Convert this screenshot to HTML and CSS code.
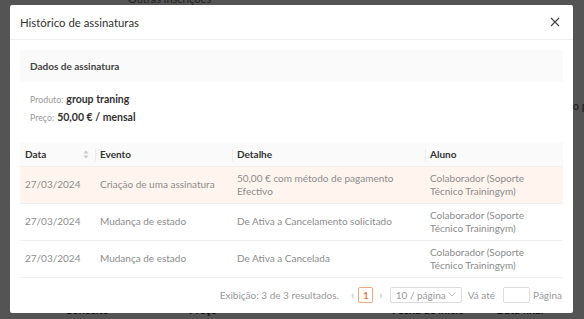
FILE: index.html
```html
<!DOCTYPE html>
<html lang="pt">
<head>
    <meta charset="UTF-8">
    <meta name="viewport" content="width=device-width, initial-scale=1.0">
    <title>Histórico de assinaturas</title>
    <link rel="stylesheet" href="styles.css">
</head>
<body>
    <div class="page">
        <div class="page-tabs">Outras inscrições</div>
        <div class="page-side">o p</div>
        <div class="page-cols">
            <span class="col-a">Conceito</span>
            <span class="col-b">Preço</span>
            <span class="col-c">Fecha de inicio</span>
            <span class="col-d">Data final</span>
        </div>
    </div>

    <div class="mask"></div>

    <div class="modal">
        <div class="modal-header">
            <span class="modal-title">Histórico de assinaturas</span>
            <svg class="close" width="10" height="10" viewBox="0 0 10 10">
                <path d="M1 1 L9 9 M9 1 L1 9" stroke="#444" stroke-width="1.1" fill="none"/>
            </svg>
        </div>

        <div class="modal-body">
            <div class="info-box">Dados de assinatura</div>
            <div class="info-lines">
                <div class="info-row"><span class="label">Produto:</span> <b>group traning</b></div>
                <div class="info-row"><span class="label">Preço:</span> <b>50,00 € / mensal</b></div>
            </div>

            <table class="history">
                <thead>
                    <tr>
                        <th class="c-date">
                            <span class="th-in">Data
                                <svg class="sort" width="6" height="9" viewBox="0 0 6 9">
                                    <path d="M3 0.5 L5.5 3.5 L0.5 3.5 Z M3 8.5 L5.5 5.5 L0.5 5.5 Z" fill="#c8c8c8"/>
                                </svg>
                            </span>
                        </th>
                        <th class="c-event">Evento</th>
                        <th class="c-detail">Detalhe</th>
                        <th class="c-user">Aluno</th>
                    </tr>
                </thead>
                <tbody>
                    <tr class="active">
                        <td>27/03/2024</td>
                        <td>Criação de uma assinatura</td>
                        <td>50,00 € com método de pagamento Efectivo</td>
                        <td>Colaborador (Soporte Técnico Trainingym)</td>
                    </tr>
                    <tr>
                        <td>27/03/2024</td>
                        <td>Mudança de estado</td>
                        <td>De Ativa a Cancelamento solicitado</td>
                        <td>Colaborador (Soporte Técnico Trainingym)</td>
                    </tr>
                    <tr>
                        <td>27/03/2024</td>
                        <td>Mudança de estado</td>
                        <td>De Ativa a Cancelada</td>
                        <td>Colaborador (Soporte Técnico Trainingym)</td>
                    </tr>
                </tbody>
            </table>

            <div class="pager">
                <span class="total">Exibição: 3 de 3 resultados.</span>
                <span class="arrow prev">&lsaquo;</span>
                <span class="page-num">1</span>
                <span class="arrow next">&rsaquo;</span>
                <span class="size-select">10 / página
                    <svg width="8" height="5" viewBox="0 0 8 5">
                        <path d="M0.5 0.5 L4 4 L7.5 0.5" stroke="#bbb" fill="none"/>
                    </svg>
                </span>
                <span class="goto">Vá até</span>
                <span class="goto-input"></span>
                <span class="goto-end">Página</span>
            </div>
        </div>
    </div>
</body>
</html>
```

FILE: styles.css
```css
body {
    margin: 0;
    font-family: Lato, "Noto Sans", sans-serif;
    font-size: 10px;
    color: #333;
    width: 584px;
    height: 319px;
    overflow: hidden;
    position: relative;
    background-color: #fff;
}

/* page behind the dialog */
.page {
    height: 319px;
    position: relative;
    color: #222;
    font-weight: 700;
    font-size: 11px;
}

.page-tabs {
    padding-left: 128px;
    margin-top: -8px;
    font-weight: 400;
    color: #666;
}

.page-side {
    position: absolute;
    top: 107px;
    right: -4px;
    font-weight: 400;
    color: #555;
}

.page-cols {
    position: absolute;
    top: 311px;
    left: 0;
    width: 584px;
    display: flex;
}

.col-a { margin-left: 65px; }
.col-b { margin-left: 80px; }
.col-c { margin-left: 175px; }
.col-d { margin-left: 32px; }

.mask {
    position: absolute;
    inset: 0;
    background-color: rgba(0, 0, 0, 0.67);
}

.modal {
    position: absolute;
    left: 10px;
    top: 5px;
    width: 563px;
    height: 308px;
    background-color: #fff;
    border-radius: 2px;
}

.modal-header {
    height: 34px;
    padding: 0 13px 0 10px;
    display: flex;
    align-items: center;
    justify-content: space-between;
    border-bottom: 1px solid #eceff1;
}

.modal-title {
    font-size: 11.4px;
    color: #333;
}

.modal-body {
    padding: 10px 10px 0 10px;
}

.info-box {
    height: 32px;
    line-height: 32px;
    padding-left: 10px;
    background-color: #fafafa;
    font-weight: 700;
    color: #444;
}

.info-lines {
    padding: 8px 0 0 10px;
    color: #333;
}

.info-row {
    height: 18px;
    display: flex;
    align-items: center;
    gap: 3px;
}

.info-row b {
    font-weight: 700;
    font-size: 10.5px;
}

.label {
    color: #9a9a9a;
    font-size: 8.8px;
}

.history {
    margin-top: 17px;
    width: 543px;
    border-collapse: collapse;
    table-layout: fixed;
}

.history th {
    box-sizing: border-box;
    height: 23px;
    padding: 0 5px;
    background-color: #fafafa;
    text-align: left;
    font-weight: 700;
    color: #333;
    border-bottom: 1px solid #f0f0f0;
    position: relative;
}

.history th + th::before {
    content: "";
    position: absolute;
    left: 0;
    top: 6px;
    height: 12px;
    width: 1px;
    background-color: #ececec;
}

.th-in {
    display: flex;
    align-items: center;
    justify-content: space-between;
    padding-right: 1px;
}

.c-date { width: 75px; }
.c-event { width: 137px; }
.c-detail { width: 193px; }
.c-user { width: 138px; }

.history td {
    height: 36px;
    padding: 0 5px;
    color: #8c8c8c;
    line-height: 13px;
    border-bottom: 1px solid #f0f0f0;
    vertical-align: middle;
}

.history tr.active td {
    background-color: #fff5ee;
}

.pager {
    height: 34px;
    display: flex;
    align-items: center;
    justify-content: flex-end;
    padding-right: 1px;
    color: #999;
}

.arrow {
    color: #bbb;
    font-size: 12px;
}

.prev { margin-left: 12px; }

.page-num {
    margin-left: 4px;
    width: 13px;
    height: 14px;
    border: 1px solid #f5a77c;
    border-radius: 2px;
    color: #f07a3c;
    font-weight: 700;
    display: flex;
    align-items: center;
    justify-content: center;
}

.next { margin-left: 6px; }

.size-select {
    margin-left: 7px;
    width: 60px;
    height: 14px;
    padding: 0 5px;
    border: 1px solid #ddd;
    border-radius: 2px;
    display: flex;
    align-items: center;
    justify-content: space-between;
    color: #999;
}

.goto { margin-left: 6px; }

.goto-input {
    margin-left: 8px;
    width: 25px;
    height: 14px;
    border: 1px solid #ddd;
    border-radius: 2px;
}

.goto-end { margin-left: 3px; }
```
